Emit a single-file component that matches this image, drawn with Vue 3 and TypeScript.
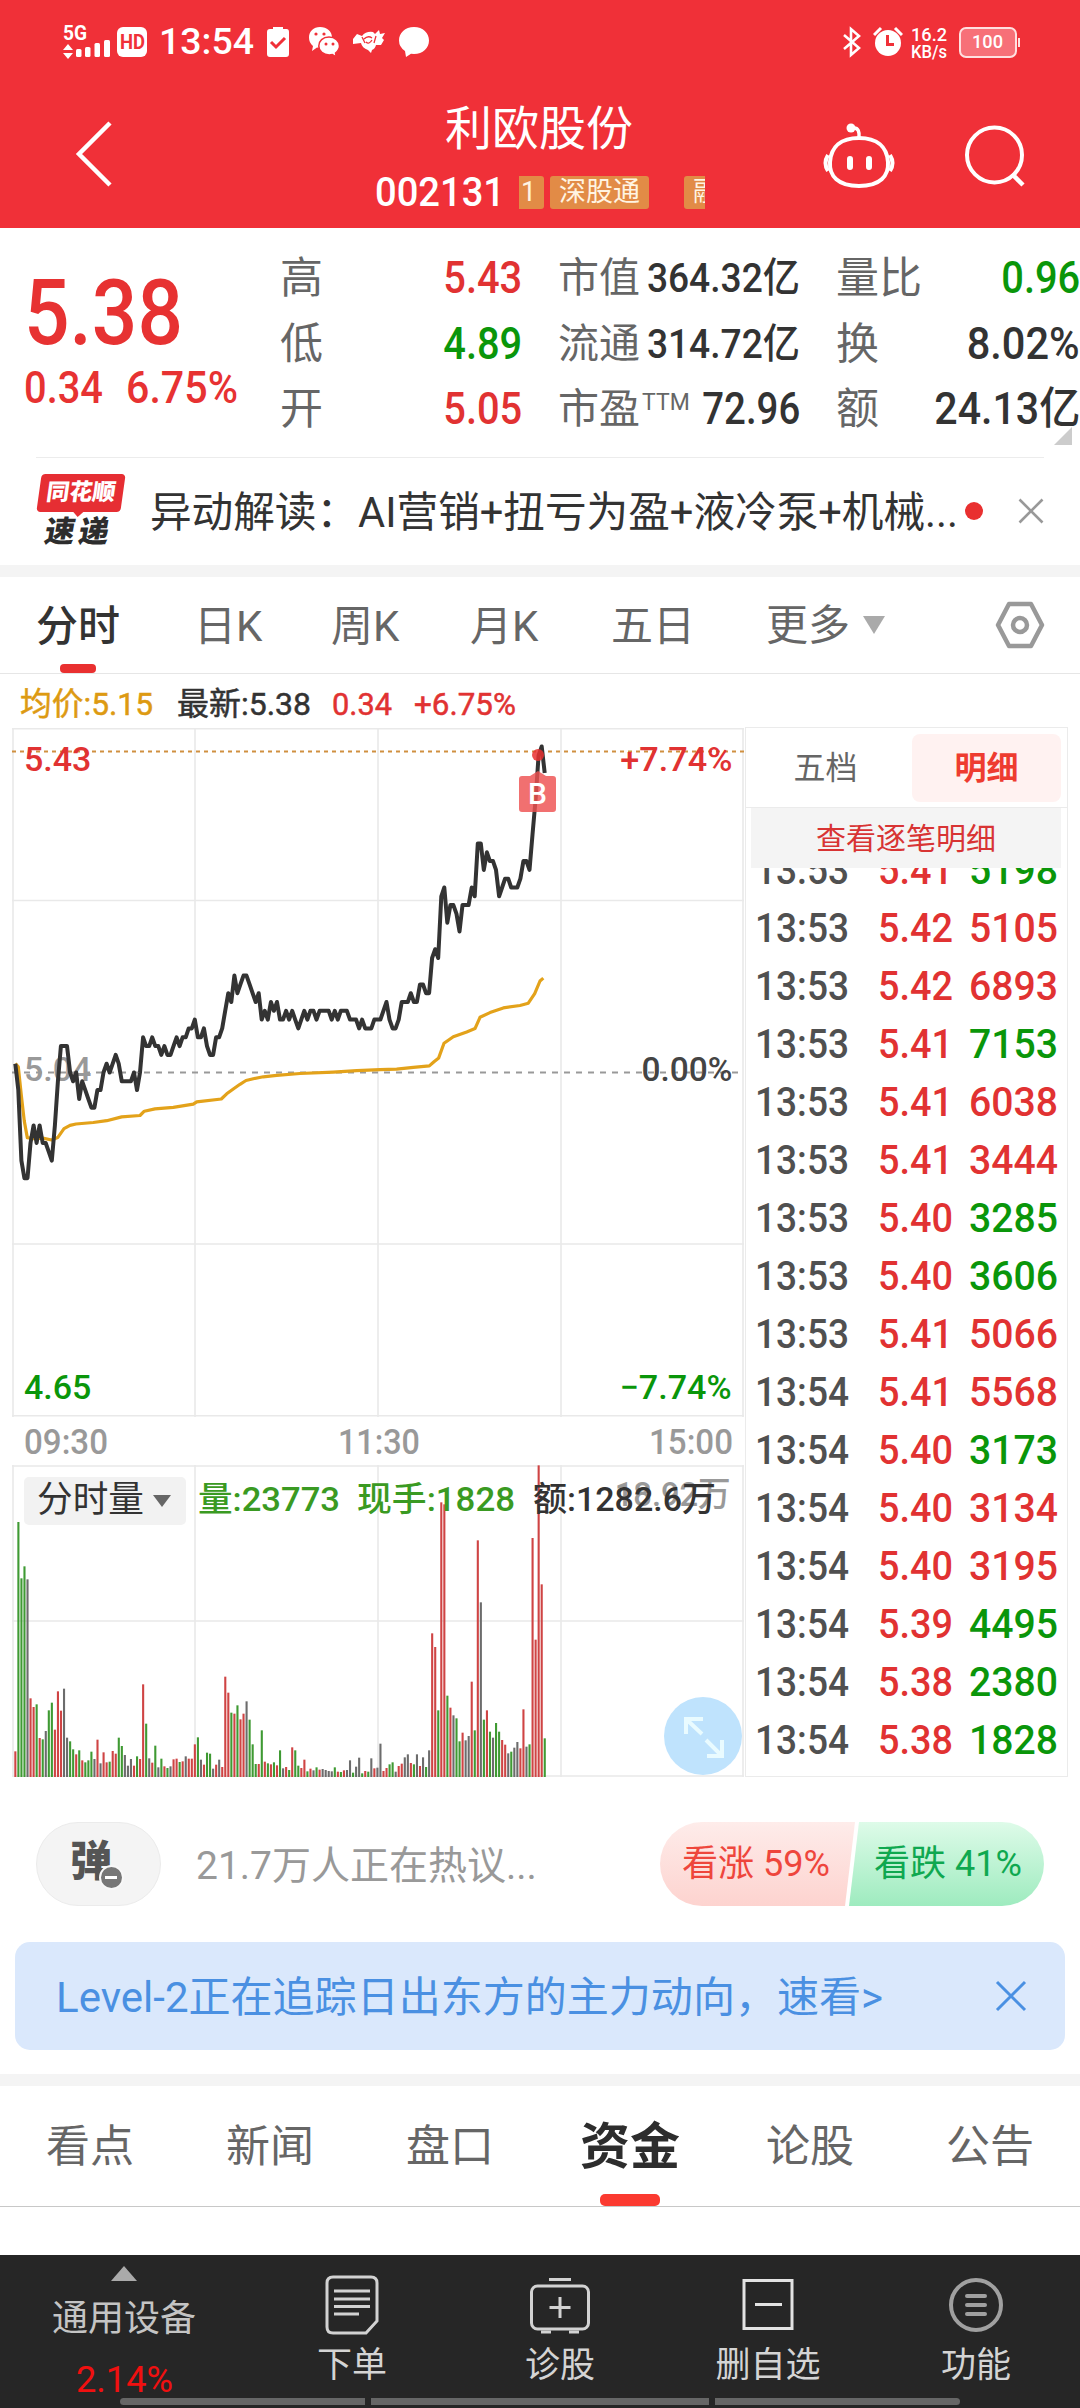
<script setup lang="ts">
interface Tick { time: string; price: string; volume: string; up: boolean }
interface Bar { x: number; h: number; fill: string }

// Condenses the numerals to the width given, keeping the text itself untouched.
const vFit = {
  mounted(el: HTMLElement, binding: { value: number }) {
    const natural = el.getBoundingClientRect().width
    if (!natural || !binding.value) return
    const right = el.classList.contains('from-right')
    el.style.transformOrigin = right ? '100% 50%' : '0 50%'
    el.style.transform = `scaleX(${binding.value / natural})`
    el.style[right ? 'marginLeft' : 'marginRight'] = `${binding.value - natural}px`
  },
}

const ticks: Tick[] = [
  ['13:53', '5.41', '5198', 0], ['13:53', '5.42', '5105', 1], ['13:53', '5.42', '6893', 1],
  ['13:53', '5.41', '7153', 0], ['13:53', '5.41', '6038', 1], ['13:53', '5.41', '3444', 1],
  ['13:53', '5.40', '3285', 0], ['13:53', '5.40', '3606', 0], ['13:53', '5.41', '5066', 1],
  ['13:54', '5.41', '5568', 1], ['13:54', '5.40', '3173', 0], ['13:54', '5.40', '3134', 1],
  ['13:54', '5.40', '3195', 1], ['13:54', '5.39', '4495', 0], ['13:54', '5.38', '2380', 0],
  ['13:54', '5.38', '1828', 0],
].map(([time, price, volume, up]) => ({ time, price, volume, up: up === 1 }) as Tick)

const minute = 3.0425
const prices = [
  505, 502, 494, 492, 492, 496, 498, 496, 498, 496, 496, 495, 494, 498, 503, 507, 507, 507, 504, 503,
  504, 501, 503, 502, 501, 500, 500, 502, 502, 504, 505, 504, 505, 506, 505, 503, 503, 503, 503, 504,
  502, 504, 508, 507, 507, 508, 507, 507, 506, 507, 506, 506, 507, 508, 507, 508, 508, 509, 509, 510,
  508, 508, 509, 507, 506, 506, 508, 508, 509, 511, 513, 512, 515, 513, 514, 515, 515, 514, 513, 512,
  513, 510, 511, 510, 512, 511, 512, 510, 510, 511, 510, 511, 510, 509, 510, 511, 510, 511, 511, 510,
  511, 511, 511, 511, 510, 511, 510, 511, 511, 511, 510, 510, 510, 509, 510, 509, 509, 509, 510, 510,
  510, 511, 512, 510, 509, 509, 510, 512, 512, 512, 513, 512, 512, 514, 514, 513, 513, 517, 518, 517,
  524, 525, 521, 523, 523, 522, 520, 523, 523, 523, 525, 524, 530, 530, 527, 529, 528, 528, 527, 524,
  525, 526, 526, 525, 525, 525, 526, 528, 528, 527, 531, 535, 540, 541, 538,
]
const pricePath = prices
  .map((p, i) => `${(3.3 + i * minute).toFixed(1)},${(344.5 - (p - 504) * 8.81).toFixed(1)}`)
  .join(' ')

const averageKnots = [
  [46, 728], [55, 735], [64, 795], [73, 850], [82, 885], [100, 887], [128, 886], [155, 890], [173, 885],
  [192, 866], [210, 859], [228, 856], [280, 853], [320, 849], [365, 841], [420, 838], [433, 829],
  [465, 824], [520, 821], [580, 814], [590, 809], [664, 803], [680, 792], [700, 782], [720, 772],
  [738, 764], [760, 760], [790, 756], [830, 753], [900, 749], [1000, 746], [1070, 743], [1140, 741],
  [1190, 740], [1240, 736], [1288, 733], [1302, 724], [1316, 716], [1332, 685], [1360, 671],
  [1400, 661], [1425, 654], [1440, 630], [1470, 620], [1510, 610], [1560, 605], [1585, 600],
  [1604, 580], [1620, 553], [1630, 547],
]
const averagePath = averageKnots
  .map(([x, y]) => `${(x / 3 - 12).toFixed(1)},${(y / 2.119 - 8).toFixed(1)}`)
  .join(' ')

const volumeData =
  'r77 g765 g596 g632 k593 r236 r210 g218 r117 g113 k138 g200 g223 r142 r257 r199 k265 k118 g107 g83 ' +
  'r68 g80 r50 g44 g50 g76 k54 r112 k41 r74 r44 g46 r78 r70 g118 g93 k66 k34 k54 r34 ' +
  'g62 r54 r278 g160 k56 r43 g94 k29 g55 r32 g27 k32 r53 r55 g45 r47 k62 r55 r55 r98 ' +
  'g119 k52 r37 g73 g70 k25 r37 k52 r30 r301 r253 g193 r190 g215 r173 r190 k227 g172 g98 g39 ' +
  'r39 g140 r46 g41 r38 g44 r35 g80 k26 r30 g21 r89 g80 g34 r27 r52 g17 r25 k20 g29 ' +
  'r22 k24 k21 k18 k17 g29 r16 g15 r20 k21 k50 g13 k31 k58 g11 r18 g16 k56 r26 k28 ' +
  'k100 r18 r27 g38 g44 k16 r33 r40 k59 k68 r42 g38 k68 r33 k59 g30 k80 r431 r390 g200 ' +
  'r824 r818 g244 r208 k185 g176 g107 r133 k110 k123 r286 g140 r710 k524 g172 r200 g136 k118 g162 g136 ' +
  'r111 r97 k71 g76 k88 k105 r86 r203 k91 g98 r717 r412 r935 r578 g116'
const tone: Record<string, string> = { r: '#cf4444', g: '#3f9a33', k: '#6c6c6c' }
const bars: Bar[] = volumeData.split(' ').map((s, i) => ({
  x: 2.3 + i * minute,
  h: Number(s.slice(1)) / 3,
  fill: tone[s[0]],
}))

const periods = [
  { name: '日K', width: 137 }, { name: '周K', width: 139 }, { name: '月K', width: 141 }, { name: '五日', width: 154 },
]
const sections = ['看点', '新闻', '盘口', '资金', '论股', '公告']
</script>

<template>
  <div class="screen">
    <header class="top">
      <div class="status">
        <svg class="signal" width="50" height="40" viewBox="0 -4 50 40" fill="#fff">
          <text x="1" y="16" font-size="20" font-weight="700" textLength="24" lengthAdjust="spacingAndGlyphs">5G</text>
          <path d="M1 26l5-6 5 6zM1 29l5 6 5-6z" />
          <rect x="14" y="25" width="5.5" height="8" rx="1.5" /><rect x="23" y="23" width="5.5" height="10" rx="1.5" />
          <rect x="32.500" y="19" width="5.500" height="14" rx="1.500" /><rect x="42" y="16" width="6" height="17" rx="1.5" />
        </svg>
        <span class="hd"><b v-fit="25">HD</b></span>
        <span class="clock" v-fit="95">13:54</span>
        <svg class="s-clip" width="24" height="32" viewBox="0 0 24 32"><path d="M7 3V1h10v2h3.500Q23 3 23 6v22q0 3-3 3H4q-3 0-3-3V6q0-3 3-3z" fill="#fff" /><path d="M5 16l5 5 9-9" fill="none" stroke="#f03038" stroke-width="3" /></svg>
        <svg class="s-wechat" width="32" height="32" viewBox="0 0 32 32">
          <path d="M12 1c7 0 12 4.500 12 10.500S19 22 12 22l-3-.4L4 25l1-5Q1 17 1 11.500C1 5.500 5.500 1 12 1z" fill="#fff" />
          <path d="M21 11c6 0 10.500 4 10.500 9 0 3-1.500 5-4 7l.8 4-4-2.400-3 .4c-6 0-10.500-4-10.500-9s4-9 10.200-9z" fill="#fff" stroke="#f03038" stroke-width="1.500" />
          <g fill="#f03038"><circle cx="8" cy="8" r="1.600" /><circle cx="16" cy="8" r="1.600" /><circle cx="18" cy="18" r="1.500" /><circle cx="25" cy="18" r="1.500" /></g>
        </svg>
        <svg class="s-bird" width="32" height="24" viewBox="0 0 32 24" fill="#fff"><path d="M0 9l4-5 5 2q4-5 11-4l2 2 4-4 1 4 5-1-3 5 2 2-3 5h-5q-1 4-4 5l-1 3-3-3q-6-2-7-7l-8 1z" /><path d="M11 9q4-4 8-1M13 12q3 3 6-2M9 7l3 6M23 6l-2 7" stroke="#f03038" stroke-width="1.300" fill="none" /></svg>
        <svg class="s-bubble" width="32" height="32" viewBox="0 0 32 32"><path d="M16 1c9 0 15 6 15 13.500S25 28 16 28l-3-.3L8 31l-1-6q-6-4-6-10.500C1 7 7 1 16 1z" fill="#fff" /></svg>
        <svg class="s-bt" width="20" height="32" viewBox="0 0 20 32" fill="none" stroke="#fff" stroke-width="2.600"><path d="M2 9l15 13-8 7V3l8 7L2 23" /></svg>
        <svg class="s-alarm" width="30" height="32" viewBox="0 0 30 32"><circle cx="15" cy="17" r="13" fill="#fff" /><path d="M1 9l7-7M29 9l-7-7" stroke="#fff" stroke-width="3" /><path d="M14.500 9v9.500h6.500" fill="none" stroke="#f03038" stroke-width="3" /></svg>
        <div class="speed"><b v-fit="36">16.2</b><b v-fit="36">KB/s</b></div>
        <div class="battery"><b v-fit="31">100</b></div>
      </div>
      <div class="nav">
        <svg class="back" width="44" height="72" viewBox="0 0 44 72" fill="none" stroke="#fff" stroke-width="4.500"><path d="M38 5L7 36l31 31" /></svg>
        <div class="stock">
          <h1>利欧股份</h1>
          <div class="code-line">
            <span class="code" v-fit="130">002131</span>
            <div class="ticker"><i class="tag cut-left">1</i><i class="tag">深股通</i><i class="tag cut-right">融</i></div>
          </div>
        </div>
        <svg class="robot" width="72" height="68" viewBox="0 0 72 68" fill="none" stroke="#fff" stroke-width="4">
          <path d="M36 16C18 16 8 25 7 40c-1 14 8 24 29 24s30-10 29-24C64 25 54 16 36 16z" />
          <path d="M36 16q1-10-5-10" stroke-width="3.500" /><circle cx="28" cy="6" r="4.500" fill="#fff" stroke="none" />
          <path d="M5 33q-5 8 0 16M67 33q5 8 0 16" /><path d="M27 37v8M46 37v8" stroke-width="6" stroke-linecap="round" />
        </svg>
        <svg class="search" width="64" height="64" viewBox="0 0 64 64" fill="none" stroke="#fff" stroke-width="4"><circle cx="31.500" cy="31" r="27.500" /><path d="M49 50l11 11" stroke-width="4.500" /></svg>
      </div>
    </header>

    <section class="quote">
      <div class="last">
        <div class="big"><span v-fit="159">5.38</span></div>
        <div class="change"><span v-fit="79">0.34</span><span v-fit="112">6.75%</span></div>
      </div>
      <div class="cell l1">高<b class="up from-right" v-fit="79">5.43</b></div>
      <div class="cell l2">市值<b class="from-right small" v-fit="153">364.32亿</b></div>
      <div class="cell l3">量比<b class="down from-right" v-fit="79">0.96</b></div>
      <div class="cell l1">低<b class="down from-right" v-fit="79">4.89</b></div>
      <div class="cell l2">流通<b class="from-right small" v-fit="153">314.72亿</b></div>
      <div class="cell l3">换<b class="from-right" v-fit="113">8.02%</b></div>
      <div class="cell l1">开<b class="up from-right" v-fit="79">5.05</b></div>
      <div class="cell l2">市盈<sup>TTM</sup><b class="from-right" v-fit="98">72.96</b></div>
      <div class="cell l3">额<b class="from-right" v-fit="146">24.13亿</b></div>
      <i class="corner"></i>
    </section>

    <section class="express">
      <div class="logo"><span class="logo-red"><em>同花顺</em></span><em class="logo-dark">速递</em></div>
      <p><span v-fit="808">异动解读：AI营销+扭亏为盈+液冷泵+机械...</span></p>
      <i class="dot"></i>
      <svg width="26" height="26" viewBox="0 0 26 26" stroke="#999" stroke-width="2.600"><path d="M1.500 1.500l23 23M24.500 1.500l-23 23" /></svg>
    </section>
    <div class="band"></div>

    <nav class="periods">
      <span class="on">分时</span>
      <span v-for="p in periods" :key="p.name" :style="{ width: p.width + 'px' }">{{ p.name }}</span>
      <span class="more">更多<i></i></span>
      <svg width="52" height="50" viewBox="0 0 52 50" fill="none" stroke="#999"><path d="M15 4h22l11 21-11 21H15L4 25z" stroke-width="4.500" stroke-linejoin="round" /><circle cx="26" cy="25" r="7" stroke-width="4.500" /></svg>
    </nav>

    <main class="board">
      <div class="charts">
        <div class="summary">
          <span class="avg" v-fit="133">均价:5.15</span><span class="cur" v-fit="134">最新:5.38</span>
          <span class="up d" v-fit="60">0.34</span><span class="up pc" v-fit="102">+6.75%</span>
        </div>
        <div class="price-chart">
          <svg width="732" height="689" viewBox="0 0 732 689" fill="none">
            <g stroke="#e9e9e9" stroke-width="1.600"><path d="M0 .8h732M0 172.500h732M0 516h732M0 687.700h732M1 0v689M183 0v689M366 0v689M549 0v689M731 0v689" /></g>
            <path d="M0 23.600h732" stroke="#d09040" stroke-width="2" stroke-dasharray="4 4" />
            <path d="M0 344.500h732" stroke="#999" stroke-width="1.800" stroke-dasharray="6 6" />
          </svg>
          <b class="lab up tl">5.43</b><b class="lab mid">5.04</b><b class="lab down bl">4.65</b>
          <b class="lab up tr"><span class="from-right" v-fit="112">+7.74%</span></b>
          <b class="lab zero"><span class="from-right" v-fit="91">0.00%</span></b>
          <b class="lab down br"><span class="from-right" v-fit="112">−7.74%</span></b>
          <svg class="lines" width="732" height="689" viewBox="0 0 732 689" fill="none" stroke-linejoin="round">
            <polyline :points="averagePath" stroke="#e3a21a" stroke-width="3.200" />
            <polyline :points="pricePath" stroke="#333" stroke-width="4" />
            <circle cx="526" cy="27" r="6" fill="#e93030" fill-opacity=".85" />
            <path d="M518 48l8-5 8 5h7q3 0 3 3v30q0 3-3 3h-31q-3 0-3-3V51q0-3 3-3z" fill="#ee5050" fill-opacity=".82" />
            <text x="525.500" y="76" font-size="30" fill="#fff" text-anchor="middle" font-weight="500">B</text>
          </svg>
        </div>
        <div class="times"><b v-fit="84">09:30</b><b v-fit="82">11:30</b><b v-fit="84">15:00</b></div>
        <div class="volume-chart">
          <svg width="732" height="312" viewBox="0 0 732 312">
            <path d="M0 1h732M0 156h732M0 311h732M1 0v312M183 0v312M366 0v312M549 0v312M731 0v312" fill="none" stroke="#e9e9e9" stroke-width="1.600" />
            <rect v-for="(b, i) in bars" :key="i" :x="b.x" :y="312 - b.h" width="2.100" :height="b.h" :fill="b.fill" />
          </svg>
          <span class="max"><span class="from-right" v-fit="116">18.92万</span></span>
          <div class="volume-info">
            <span class="chip"><span v-fit="107">分时量</span><i></i></span>
            <span class="g v1" v-fit="142">量:23773</span><span class="g v2" v-fit="158">现手:1828</span><span class="v3" v-fit="183">额:1282.6万</span>
          </div>
          <svg class="expand" width="78" height="78" viewBox="0 0 78 78" fill="none" stroke="#e9fbff" stroke-width="4"><circle cx="39" cy="39" r="39" fill="#bfe3fd" stroke="none" /><path d="M38 37L22 22M22 37V22h17M42 43l16 16M58 43v16H43" /></svg>
        </div>
      </div>
      <aside class="tape">
        <div class="tape-tabs"><span>五档</span><span class="on">明细</span></div>
        <div class="detail-link">查看逐笔明细</div>
        <ul>
          <li v-for="(t, i) in ticks" :key="i">
            <b class="t" v-fit="94">{{ t.time }}</b><b class="up p" v-fit="75">{{ t.price }}</b><b class="v" :class="t.up ? 'up' : 'down'" v-fit="89">{{ t.volume }}</b>
          </li>
        </ul>
      </aside>
    </main>

    <section class="talk">
      <div class="danmu">弹<i></i></div>
      <p>21.7万人正在热议...</p>
      <div class="vote">
        <svg width="384" height="84" viewBox="0 0 384 84">
          <defs>
            <linearGradient id="rise" x1="0" y1="0" x2="0" y2="1"><stop offset="0" stop-color="#feecea" /><stop offset="1" stop-color="#fdd3cf" /></linearGradient>
            <linearGradient id="fall" x1="0" y1="0" x2="0" y2="1"><stop offset="0" stop-color="#defbe9" /><stop offset="1" stop-color="#9eebbf" /></linearGradient>
          </defs>
          <path d="M42 0h153l-10 84H42a42 42 0 010-84z" fill="url(#rise)" /><path d="M199 0h143a42 42 0 010 84H189z" fill="url(#fall)" />
        </svg>
        <div class="vote-text"><span class="rise" v-fit="148">看涨 59%</span><span class="fall" v-fit="148">看跌 41%</span></div>
      </div>
    </section>

    <section class="banner">
      <span v-fit="827">Level-2正在追踪日出东方的主力动向，速看&gt;</span>
      <svg width="32" height="32" viewBox="0 0 32 32" stroke="#4a90e2" stroke-width="3"><path d="M2 2l28 28M30 2L2 30" /></svg>
    </section>
    <div class="band b2"></div>

    <nav class="sections"><span v-for="s in sections" :key="s" :class="{ on: s === '资金' }">{{ s }}</span></nav>
    <div class="blank"></div>

    <footer>
      <div class="sector"><i></i><span>通用设备</span><b v-fit="97">2.14%</b></div>
      <div class="act">
        <svg width="60" height="62" viewBox="0 0 60 62" fill="none" stroke="#d2d2d2" stroke-width="3"><path d="M11 3h38q6 0 6 6v38L44 59H11q-6 0-6-6V9q0-6 6-6z" /><path d="M12 17h36M12 25h36M12 32.500h36M12 40h25" /></svg>
        <span>下单</span>
      </div>
      <div class="act">
        <svg width="64" height="62" viewBox="0 0 64 62" fill="none" stroke="#d2d2d2" stroke-width="3"><rect x="3.500" y="12" width="57" height="43" rx="6" /><path d="M21 5.500h22M13 58h10M41 58h10M32 23v21M21.500 33.500h21" /></svg>
        <span>诊股</span>
      </div>
      <div class="act">
        <svg width="60" height="62" viewBox="0 0 60 62" fill="none" stroke="#e2e2e2" stroke-width="3"><rect x="6" y="6.500" width="48" height="48" /><path d="M17 30.500h27" /></svg>
        <span>删自选</span>
      </div>
      <div class="act">
        <svg width="60" height="62" viewBox="0 0 60 62" fill="none" stroke="#a0a0a0" stroke-width="4"><circle cx="30" cy="31" r="25" /><path d="M21 22h18M21 31h18M21 40h18" stroke-linecap="round" /></svg>
        <span>功能</span>
      </div>
      <div class="home"><i></i><i></i><i></i></div>
    </footer>
  </div>
</template>

<style>
body { margin: 0; background: #fff; }
</style>

<style scoped>
* { box-sizing: border-box; }
.screen { width: 1080px; height: 2408px; overflow: hidden; background: #fff; color: #333; font-family: Roboto, "Noto Sans CJK SC", sans-serif; white-space: nowrap; }
.screen p, h1, ul { margin: 0; padding: 0; font-weight: 400; }
i { font-style: normal; }
svg { display: block; flex: none; }
b, span { flex: none; }
b { display: inline-block; font-weight: 500; }
.up { color: #e13232; }
.down { color: #0a960a; }

.top { height: 228px; background: #f03038; color: #fff; }
.status { display: flex; align-items: center; height: 84px; padding-left: 62px; }
.signal { overflow: visible; margin-top: -4px; }
.hd { width: 30px; height: 30px; margin-left: 5px; border-radius: 6px; background: #fff; color: #f03038; line-height: 30px; font-size: 21px; padding-left: 2.5px; }
.hd b { font-weight: 700; }
.clock { margin-left: 12px; font-size: 36px; font-weight: 500; }
.s-clip { margin-left: 12px; }
.s-wechat { margin-left: 18px; }
.s-bird { margin-left: 13px; }
.s-bubble { margin-left: 13px; }
.s-bt { margin-left: 412px; }
.s-alarm { margin-left: 11px; }
.speed { display: flex; flex-direction: column; align-items: flex-start; width: 37px; margin-left: 8px; font-size: 18px; line-height: 17px; padding-top: 1px; }
.battery { position: relative; width: 58px; height: 31px; margin-left: 11px; border: 2.5px solid #ffe0e0; border-radius: 7px; background: #f77078; font-size: 19px; line-height: 26px; padding-left: 11px; }
.battery::after { content: ""; position: absolute; right: -5px; top: 9px; width: 2px; height: 9px; background: #ffe0e0; }

.nav { display: flex; height: 144px; }
.back { margin: 34px 0 0 72px; }
.stock { width: 330px; margin-left: 259px; }
h1 { margin: 15px 0 0 -2px; height: 60px; line-height: 60px; font-size: 47px; text-align: center; }
.code-line { display: flex; align-items: center; height: 34px; margin-top: 16px; }
.code { font-size: 40px; font-weight: 500; }
.ticker { display: flex; width: 186px; margin-left: 14px; overflow: hidden; font-size: 27px; line-height: 33px; }
.tag { flex: none; height: 33px; padding: 0 9px 0 9px; border-radius: 3px; background: #e28b46; color: #fff4e2; }
.cut-left { padding: 0 7px 0 2px; margin-right: 6px; border-radius: 0 3px 3px 0; width: 25px; }
.cut-right { margin-left: 35px; }
.robot { margin: 38px 0 0 118px; }
.search { margin: 40px 0 0 68px; }

.quote { position: relative; display: grid; grid-template-columns: 280px 242px 278px 280px; grid-template-rows: repeat(3, 65.5px); height: 229px; padding-top: 18px; }
.quote::after { content: ""; position: absolute; left: 36px; right: 36px; bottom: -1px; height: 1px; background: #ececec; }
.last { grid-row: 1 / 4; color: #e73232; font-weight: 500; }
.big { height: 100px; margin-top: 18px; padding-left: 24px; line-height: 100px; font-size: 90px; }
.big span, .change span, .cell b, p > span, .banner > span, .max > span, .lab > span, .chip > span { display: inline-block; }
.change { display: flex; gap: 23px; margin: -4px 0 0 24px; line-height: 56px; font-size: 44px; }
.cell { display: flex; align-items: center; justify-content: space-between; line-height: 65.5px; font-size: 43px; color: #666; }
.cell b { font-size: 44px; color: #333; }
.cell b.up { color: #e13232; }
.cell b.down { color: #0a960a; }
.cell b.small { font-size: 41px; }
.l2 { margin-left: 36px; font-size: 41px; }
.l3 { margin-left: 36px; }
.cell sup { font-size: 23px; line-height: 23px; margin: -14px auto 0 2px; vertical-align: top; }
.corner { position: absolute; right: 8px; bottom: 12px; border-style: solid; border-width: 0 0 18px 18px; border-color: transparent transparent #ccc transparent; }

.express { display: flex; align-items: center; height: 108px; }
.logo { width: 90px; margin-left: 36px; height: 74px; }
.logo-red { position: relative; display: block; height: 38px; margin: 0 3px; background: #e62e33; border-radius: 4px; transform: skewX(-8deg); color: #fff; text-align: center; font-size: 23px; line-height: 37px; }
.logo-red::after { content: ""; position: absolute; left: 36px; top: 37px; border: 6px solid transparent; border-top-color: #e62e33; }
.logo em { font-style: normal; font-weight: 900; }
.logo-dark { display: block; margin: 4px 0 0 9px; font-size: 30px; line-height: 32px; letter-spacing: 4px; transform: skewX(-10deg); color: #2d2d2d; }
.express p { margin: 3px 0 0 24px; font-size: 42px; line-height: 60px; }
.dot { width: 18px; height: 18px; margin-left: 7px; border-radius: 50%; background: #e93030; }
.express > svg { margin-left: 35px; }
.band { height: 12px; background: #f4f4f4; }

.periods { display: flex; height: 97px; padding-right: 34px; border-bottom: 1.5px solid #e6e6e6; font-size: 42px; line-height: 99px; color: #666; }
.periods .on { position: relative; width: 157px; padding-left: 36px; color: #333; font-weight: 500; }
.periods .on::after { content: ""; position: absolute; left: 60px; top: 87px; width: 36px; height: 9px; border-radius: 4px; background: #e93030; }
.periods span:nth-child(n+2) { text-indent: 37px; }
.periods .more { display: flex; align-items: center; text-indent: 35px; margin-left: 1px; }
.more i { margin-left: 13px; border-style: solid; border-width: 18px 11px 0; border-color: #aaa transparent transparent; }
.periods svg { margin: 23px 0 0 auto; }

.board { display: flex; height: 1106px; }
.charts { width: 732px; margin-left: 12px; }
.summary { display: flex; height: 54px; line-height: 60px; font-size: 32px; padding-left: 8px; }
.avg { color: #dd9a12; }
.cur { margin-left: 24px; }
.d { margin-left: 21px; }
.pc { margin-left: 22px; }
.summary span { font-weight: 400; -webkit-text-stroke: .5px; }
.price-chart { position: relative; height: 689px; }
.lines { position: absolute; left: 0; top: 0; }
.lab { position: absolute; height: 40px; line-height: 40px; font-size: 34px; }
.tl, .mid, .bl { left: 12px; }
.tr, .zero, .br { right: 12px; }
.tl, .tr { top: 11px; }
.mid, .zero { top: 321px; }
.mid { color: #999; }
.zero { color: #444; }
.bl, .br { top: 639px; }
.times { display: flex; justify-content: space-between; height: 48px; line-height: 51px; padding: 0 11px 0 12px; font-size: 35px; color: #999; }
.volume-chart { position: relative; height: 312px; }
.volume-info { position: absolute; left: 12px; top: 12px; display: flex; align-items: center; height: 48px; line-height: 44px; font-size: 34px; font-weight: 500; }
.chip { display: flex; align-items: center; width: 162px; height: 48px; padding: 0 0 3px 13px; border-radius: 5px; background: #f2f2f2; font-size: 36px; font-weight: 400; }
.volume-info > span:nth-child(n+2) { margin-top: -4px; }
.chip i { margin: 2px 0 0 9px; border-style: solid; border-width: 12px 9px 0; border-color: #666 transparent transparent; }
.g { color: #3a9a22; }
.v1 { margin-left: 12px; }
.v2 { margin-left: 17px; }
.v3 { margin-left: 18px; }
.max { position: absolute; right: 13px; top: 9px; font-size: 34px; line-height: 40px; color: #999; font-weight: 500; }
.expand { position: absolute; right: 2px; top: 232px; }

.tape { display: flex; flex-direction: column; width: 323px; height: 1050px; margin: 53px 0 0 1px; border: 1px solid #ebebeb; overflow: hidden; }
.tape-tabs { display: flex; align-items: center; height: 80px; flex: none; border-bottom: 1px solid #ebebeb; font-size: 32px; line-height: 68px; text-align: center; color: #666; }
.tape-tabs span { width: 159px; }
.tape-tabs .on { width: 149px; margin-left: 7px; border-radius: 8px; background: #fff2f1; color: #ee3c30; font-weight: 700; }
.detail-link { flex: none; height: 60px; margin: 0 6px 0 5px; background: #f4f4f4; color: #d83434; font-size: 30px; line-height: 61px; text-align: center; z-index: 1; }
ul { list-style: none; margin-top: -27px; }
li { display: flex; height: 58px; line-height: 58px; padding-left: 9px; font-size: 41.5px; }
.t { color: #505050; }
.p { margin-left: 29px; }
.v { margin-left: 16px; }

.talk { display: flex; height: 162px; padding-top: 42px; }
.danmu { position: relative; width: 125px; height: 84px; margin-left: 36px; border: 1px solid #ebebeb; border-radius: 42px; background: #f4f4f4; font-size: 42px; font-weight: 900; line-height: 78px; padding-left: 33px; color: #555; }
.danmu i { position: absolute; left: 62px; top: 42px; width: 25px; height: 25px; border: 2.5px solid #f8f8f8; border-radius: 50%; background: #777; }
.danmu i::after { content: ""; position: absolute; left: 4px; top: 8.5px; width: 12px; height: 3px; background: #fff; }
.talk p { margin-left: 35px; font-size: 39px; line-height: 88px; color: #999; }
.vote { position: relative; margin: 0 36px 0 auto; width: 384px; height: 84px; }
.vote-text { position: absolute; left: 0; top: 0; display: flex; line-height: 85px; font-size: 36px; }
.rise { margin-left: 22px; color: #ee463c; }
.fall { margin-left: 44px; color: #0fa850; }

.banner { display: flex; align-items: center; height: 108px; margin: 0 15px; padding: 0 38px 0 41px; border-radius: 15px; background: #dae8fc; color: #4a90e2; font-size: 42px; line-height: 108px; }
.banner > span { margin-top: 4px; }
.banner svg { margin-left: auto; }
.b2 { margin-top: 24px; }
.sections { display: flex; height: 121px; border-bottom: 1.5px solid #c8c8c8; font-size: 44px; line-height: 123px; color: #666; }
.sections span { position: relative; width: 180px; text-align: center; }
.sections .on { color: #2d2d2d; font-size: 50px; font-weight: 700; }
.sections .on::after { content: ""; position: absolute; left: 60px; top: 108px; width: 60px; height: 12px; border-radius: 5px; background: #fb3a30; }
.blank { height: 48px; }

footer { position: relative; display: flex; height: 153px; background: #262626; color: #d4d4d4; font-size: 35px; }
.sector { display: flex; flex-direction: column; align-items: center; width: 248px; color: #c4c4c4; }
.sector i { margin-top: 11px; border-style: solid; border-width: 0 13px 15px; border-color: transparent transparent #aaa; }
.sector span { margin-top: 13px; font-size: 36px; line-height: 50px; }
.sector b { margin-top: 16px; font-size: 37px; line-height: 40px; font-weight: 400; color: #f01010; }
.act { display: flex; flex-direction: column; align-items: center; width: 208px; padding-top: 19px; }
.act span { margin-top: 5px; line-height: 50px; }
.home { position: absolute; left: 120px; top: 143px; display: flex; gap: 6px; }
.home i { width: 245px; height: 7px; background: #666; }
.home i:nth-child(2) { width: 338px; }
.home i:first-child { border-radius: 4px 0 0 4px; }
.home i:last-child { border-radius: 0 4px 4px 0; }
</style>
